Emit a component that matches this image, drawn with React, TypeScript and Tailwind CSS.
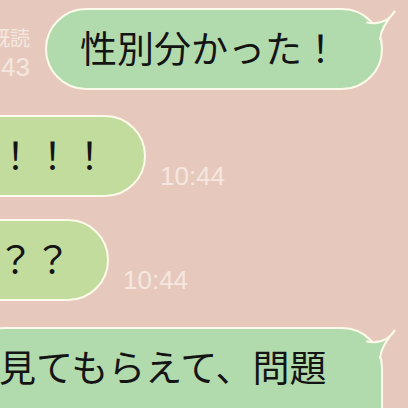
import React from 'react';

const BORDER = '#fcfaea';

const Horn = ({ fill }: { fill: string }) => (
  <svg className="absolute -right-[17px] -top-[3px]" width="60" height="50" viewBox="0 0 60 50">
    <path d="M29 15.5Q48 19 57 4Q43 20 42 32L20 36L20 20Z" fill={fill} />
    <path d="M29 15.5Q48 19 57 4Q43 20 42 32" fill="none" stroke={BORDER} strokeWidth="2" strokeLinecap="round" />
  </svg>
);

const Time = ({ children, className }: { children: React.ReactNode; className?: string }) => (
  <span className={`shrink-0 text-[26px] leading-[30px] text-[#f5e7df] font-['Liberation_Sans','Noto_Sans_CJK_JP',sans-serif] ${className ?? ''}`}>
    {children}
  </span>
);

export default function App() {
  return (
    <div className="w-[408px] h-[408px] overflow-hidden bg-[#e6c9bc] flex flex-col font-['Noto_Sans_CJK_JP',sans-serif] text-[#141414]">
      {/* sent */}
      <div className="flex justify-end items-end pt-[8px] pr-[25px]">
        <div className="shrink-0 flex flex-col items-end mr-[15px] mb-[8px] text-[#f5e7df]">
          <span className="text-[20px] leading-[22px] mb-[3px]">既読</span>
          <Time>10:43</Time>
        </div>
        <div className="relative shrink-0 whitespace-nowrap rounded-[41px] border-2 border-[#fcfaea] bg-[#b2dbad] pl-[33px] pr-[42px] pt-[12px] pb-[16px] text-[37px] leading-[50px]">
          性別分かった！
          <Horn fill="#b2dbad" />
        </div>
      </div>

      {/* received */}
      <div className="flex items-end mt-[25px] -ml-[41px]">
        <div className="shrink-0 whitespace-nowrap rounded-[41px] border-2 border-[#fcfaea] bg-[#c1dc9d] px-[36px] pt-[12px] pb-[16px] text-[37px] leading-[50px]">
          ！！！
        </div>
        <Time className="ml-[14px] mb-[6px]">10:44</Time>
      </div>

      <div className="flex items-end mt-[22px] -ml-[41px]">
        <div className="shrink-0 whitespace-nowrap rounded-[41px] border-2 border-[#fcfaea] bg-[#c1dc9d] px-[36px] pt-[12px] pb-[16px] text-[37px] leading-[50px]">
          ？？
        </div>
        <Time className="ml-[14px] mb-[6px]">10:44</Time>
      </div>

      {/* sent */}
      <div className="mt-[26px] -ml-[36px] mr-[25px]">
        <div className="relative h-[140px] rounded-[41px] border-2 border-[#fcfaea] bg-[#b2dbad] px-[33px] pt-[12px] text-[37px] leading-[50px] whitespace-nowrap">
          見てもらえて、問題
          <Horn fill="#b2dbad" />
        </div>
      </div>
    </div>
  );
}
